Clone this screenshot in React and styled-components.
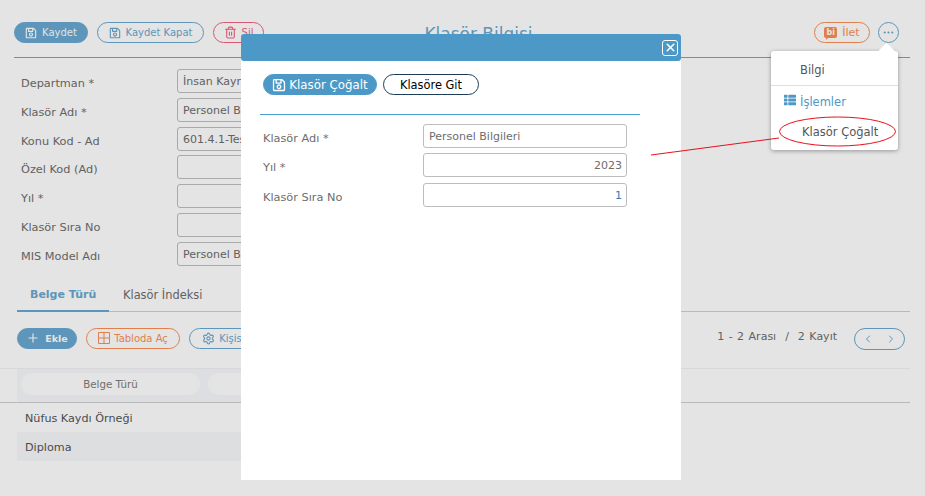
import React from 'react'
import styled, { createGlobalStyle, css } from 'styled-components'
import { Trash2, Plus, Settings, ChevronLeft, ChevronRight, Ellipsis, X } from 'lucide-react'
import { FaThList, FaRegSave } from 'react-icons/fa'

const blue = '#68a8d0'
const orange = '#fb8f54'
const red = '#f5617d'
const text = '#6d6d6d'

const GlobalStyle = createGlobalStyle`
  html, body { margin: 0; height: 100%; background: #fff; overflow: hidden; }
  body { font-family: "DejaVu Sans", Verdana, sans-serif; font-size: 11px; color: ${text}; }
  * { box-sizing: border-box; }
`

const Page = styled.div`
  position: relative;
  width: 925px;
  height: 496px;
  overflow: hidden;
`

const Content = styled.div`
  padding: 22px 15px 0 14px;
`

const Toolbar = styled.header`
  display: flex;
  align-items: flex-start;
  height: 36px;
  padding-right: 11px;
  border-bottom: 1px solid ${blue};
`

const ButtonGroup = styled.div`
  display: flex;
  align-items: center;
  gap: ${p => p.$gap || 9}px;
`

const Title = styled.h1`
  flex: 1;
  margin: 0;
  padding: 2px 121px 0 0;
  text-align: center;
  font-size: 17px;
  line-height: 20px;
  font-weight: 400;
  color: ${blue};
`

const Pill = styled.button`
  display: inline-flex;
  align-items: center;
  justify-content: center;
  gap: ${p => p.$gap || 5}px;
  width: ${p => p.$w}px;
  height: 21px;
  padding: 0;
  border-radius: 11px;
  border: 1px solid ${p => p.$color || blue};
  background: transparent;
  color: ${p => p.$color || blue};
  font: 400 ${p => p.$size || 10}px "DejaVu Sans", Verdana, sans-serif;
  ${p => p.$solid && css`
    background: ${p.$color || blue};
    color: #fff;
    font-weight: ${p.$bold ? 700 : 400};
  `}
`

const RoundButton = styled(Pill)`
  width: 21px;
  border-radius: 50%;
`

const Form = styled.div`
  display: grid;
  grid-template-columns: 156px 300px;
  grid-auto-rows: 24px;
  row-gap: 4.8px;
  margin-top: 11px;
  padding-left: 7px;
`

const Label = styled.label`
  padding-top: 7px;
  font-size: 11.3px;
  line-height: 16px;
  color: ${text};
  white-space: nowrap;
`

const Field = styled.div`
  height: 24px;
  padding: 0 ${p => (p.$number ? 4 : 5)}px;
  border: 1px solid #bdbdbd;
  border-radius: 3px;
  background: #fff;
  font-size: 11px;
  line-height: 23px;
  text-align: ${p => (p.$number ? 'right' : 'left')};
  color: ${p => p.$color || text};
  white-space: nowrap;
  overflow: hidden;
`

const Tabs = styled.nav`
  display: flex;
  height: 32px;
  margin: 14px 0 0 3px;
  border-bottom: 1px solid #cfcfcf;
`

const Tab = styled.div`
  width: ${p => p.$w}px;
  padding-left: ${p => p.$pad}px;
  margin-bottom: -1px;
  font-size: ${p => (p.$active ? 11 : 11.4)}px;
  line-height: 30px;
  font-weight: ${p => (p.$active ? 700 : 400)};
  color: ${p => (p.$active ? blue : text)};
  border-bottom: ${p => (p.$active ? `2px solid ${blue}` : 'none')};
`

const ListBar = styled.div`
  display: flex;
  align-items: center;
  justify-content: space-between;
  height: 21px;
  margin: 16px 5px 0 3px;
`

const Pager = styled.div`
  display: flex;
  align-items: center;
  gap: 17px;
  font-size: 11px;
  word-spacing: 1px;
`

const PagerText = styled.span`
  margin-top: -3px;
`

const PagerButton = styled.div`
  display: flex;
  align-items: center;
  justify-content: space-around;
  width: 51px;
  height: 22px;
  margin-top: 2px;
  padding: 0 2px;
  border: 1px solid ${blue};
  border-radius: 11px;
  color: ${blue};
`

const Table = styled.section`
  margin: 19px 0 0 -14px;
  border-top: 1px solid #f2f2f2;
`

const HeadRow = styled.div`
  height: 34px;
  padding-left: 17px;
  border-bottom: 1px solid #cfcfcf;
`

const HeadCells = styled.div`
  display: flex;
  gap: 8px;
  width: 400px;
  height: 33px;
  padding: 4px;
  background: #f7f9fc;
`

const HeadCell = styled.div`
  flex: ${p => (p.$wide ? 1 : '0 0 179px')};
  height: 22px;
  border-radius: 11px;
  background: #fff;
  text-align: center;
  font-size: 10.3px;
  line-height: 22px;
  color: #7d7d7d;
`

const Row = styled.div`
  width: 400px;
  height: 29px;
  margin-left: 17px;
  padding-left: 8px;
  font-size: 11.2px;
  line-height: 31px;
  color: #555;
  background: ${p => (p.$alt ? '#f8f9fb' : 'transparent')};
`

const Backdrop = styled.div`
  position: absolute;
  inset: 0;
  background: rgba(0, 0, 0, 0.106);
`

const Modal = styled.aside`
  position: absolute;
  left: 241px;
  top: 34px;
  width: 440px;
  height: 446px;
  background: #fff;
  border-radius: 3px 3px 0 0;
`

const ModalHeader = styled.div`
  display: flex;
  align-items: center;
  justify-content: flex-end;
  height: 27px;
  padding-right: 3px;
  background: #4c99c7;
  border-radius: 3px;
`

const CloseBox = styled.div`
  display: flex;
  align-items: center;
  justify-content: center;
  width: 16px;
  height: 16px;
  border: 1px solid #fff;
  border-radius: 3px;
  color: #fff;
`

const ModalBody = styled.div`
  padding: 13px 41px 0 19px;
`

const ModalActions = styled.div`
  display: flex;
  gap: 6px;
  padding: 0 0 19px 3px;
  border-bottom: 1px solid #4ba0d2;
`

const ActionButton = styled.button`
  display: inline-flex;
  align-items: center;
  justify-content: center;
  gap: 3px;
  width: ${p => p.$w}px;
  height: 21px;
  padding: 0;
  border-radius: 11px;
  border: 1px solid ${p => (p.$solid ? '#4c99c7' : '#1c3d55')};
  background: ${p => (p.$solid ? '#4c99c7' : '#fff')};
  color: ${p => (p.$solid ? '#fff' : '#000')};
  font: 400 ${p => (p.$solid ? 11.8 : 11.4)}px "DejaVu Sans", Verdana, sans-serif;
`

const ModalForm = styled.div`
  display: grid;
  grid-template-columns: 160px 204px;
  grid-auto-rows: 24px;
  row-gap: 5.3px;
  margin-top: 9px;
  padding-left: 3px;
`

const Menu = styled.div`
  position: absolute;
  left: 771px;
  top: 51px;
  width: 127px;
  height: 99px;
  background: #fff;
  border-radius: 3px;
  box-shadow: 0 1px 4px rgba(0, 0, 0, 0.35);
  font-size: 11.5px;
  &::before {
    content: '';
    position: absolute;
    left: 110px;
    top: -6px;
    width: 11px;
    height: 11px;
    background: #fff;
    transform: rotate(45deg);
  }
`

const MenuInfo = styled.div`
  height: 35px;
  padding-left: 29px;
  line-height: 39px;
  border-bottom: 1px solid #ddd;
  color: #555;
`

const MenuHeading = styled.div`
  display: flex;
  align-items: center;
  gap: 4px;
  height: 31px;
  padding-left: 13px;
  color: #4c99c7;
  svg { margin-top: -4px; }
`

const MenuItem = styled.div`
  padding-left: 31px;
  line-height: 30px;
  color: #555;
`

const Markup = styled.svg`
  position: absolute;
  left: 0;
  top: 0;
  pointer-events: none;
`

const BiIcon = styled.span`
  position: relative;
  width: 13px;
  height: 11px;
  border-radius: 2px;
  background: ${orange};
  color: #fff;
  font-size: 8px;
  font-weight: 700;
  line-height: 11px;
  text-align: center;
  &::after {
    content: '';
    position: absolute;
    left: 2px;
    bottom: -2px;
    border-left: 3px solid ${orange};
    border-bottom: 3px solid transparent;
  }
`

const TableIcon = () => (
  <svg width="12" height="12" viewBox="0 0 12 12" fill="none" stroke="currentColor" strokeWidth="1">
    <path d="M.5.5h11v11H.5zM6 .5v11M.5 6h11" />
  </svg>
)

const formRows = [
  ['Departman *', 'İnsan Kaynakları'],
  ['Klasör Adı *', 'Personel Bilgileri'],
  ['Konu Kod - Ad', '601.4.1-Tescil'],
  ['Özel Kod (Ad)', ''],
  ['Yıl *', ''],
  ['Klasör Sıra No', ''],
  ['MIS Model Adı', 'Personel Bilgileri'],
]

export default function App() {
  return (
    <Page>
      <GlobalStyle />
      <Content>
        <Toolbar>
          <ButtonGroup>
            <Pill $solid $w={74}><FaRegSave size={12} />Kaydet</Pill>
            <Pill $w={107}><FaRegSave size={12} />Kaydet Kapat</Pill>
            <Pill $w={51} $color={red}><Trash2 size={13} />Sil</Pill>
          </ButtonGroup>
          <Title>Klasör Bilgisi</Title>
          <ButtonGroup $gap={8}>
            <Pill $w={56} $color={orange} $size={11}><BiIcon>bi</BiIcon>İlet</Pill>
            <RoundButton><Ellipsis size={13} /></RoundButton>
          </ButtonGroup>
        </Toolbar>

        <Form>
          {formRows.map(([label, value]) => (
            <React.Fragment key={label}>
              <Label>{label}</Label>
              <Field>{value}</Field>
            </React.Fragment>
          ))}
        </Form>

        <Tabs>
          <Tab $active $w={92} $pad={13}>Belge Türü</Tab>
          <Tab $w={110} $pad={14}>Klasör İndeksi</Tab>
        </Tabs>

        <ListBar>
          <ButtonGroup>
            <Pill $solid $bold $w={60} $size={9.5}><Plus size={14} />Ekle</Pill>
            <Pill $w={94} $color={orange} $gap={4}><TableIcon />Tabloda Aç</Pill>
            <Pill $w={100} $gap={4}><Settings size={13} />Kişiselleştir</Pill>
          </ButtonGroup>
          <Pager>
            <PagerText>1 - 2 Arası&nbsp; /&nbsp; 2 Kayıt</PagerText>
            <PagerButton>
              <ChevronLeft size={12} />
              <ChevronRight size={12} />
            </PagerButton>
          </Pager>
        </ListBar>

        <Table>
          <HeadRow>
            <HeadCells>
              <HeadCell>Belge Türü</HeadCell>
              <HeadCell $wide />
            </HeadCells>
          </HeadRow>
          <Row>Nüfus Kaydı Örneği</Row>
          <Row $alt>Diploma</Row>
        </Table>
      </Content>

      <Backdrop />

      <Modal>
        <ModalHeader>
          <CloseBox><X size={13} strokeWidth={3} /></CloseBox>
        </ModalHeader>
        <ModalBody>
          <ModalActions>
            <ActionButton $solid $w={114}><FaRegSave size={14} />Klasör Çoğalt</ActionButton>
            <ActionButton $w={96}>Klasöre Git</ActionButton>
          </ModalActions>
          <ModalForm>
            <Label>Klasör Adı *</Label>
            <Field>Personel Bilgileri</Field>
            <Label>Yıl *</Label>
            <Field $number>2023</Field>
            <Label>Klasör Sıra No</Label>
            <Field $number $color="#2f7fb5">1</Field>
          </ModalForm>
        </ModalBody>
      </Modal>

      <Menu>
        <MenuInfo>Bilgi</MenuInfo>
        <MenuHeading><FaThList size={12} />İşlemler</MenuHeading>
        <MenuItem>Klasör Çoğalt</MenuItem>
      </Menu>

      <Markup width="925" height="496" viewBox="0 0 925 496">
        <ellipse cx="837.5" cy="131.5" rx="58" ry="14.5" fill="none" stroke="#e8101c" strokeWidth="1" />
        <line x1="651" y1="155" x2="779" y2="138" stroke="#e8101c" strokeWidth="1" />
      </Markup>
    </Page>
  )
}
